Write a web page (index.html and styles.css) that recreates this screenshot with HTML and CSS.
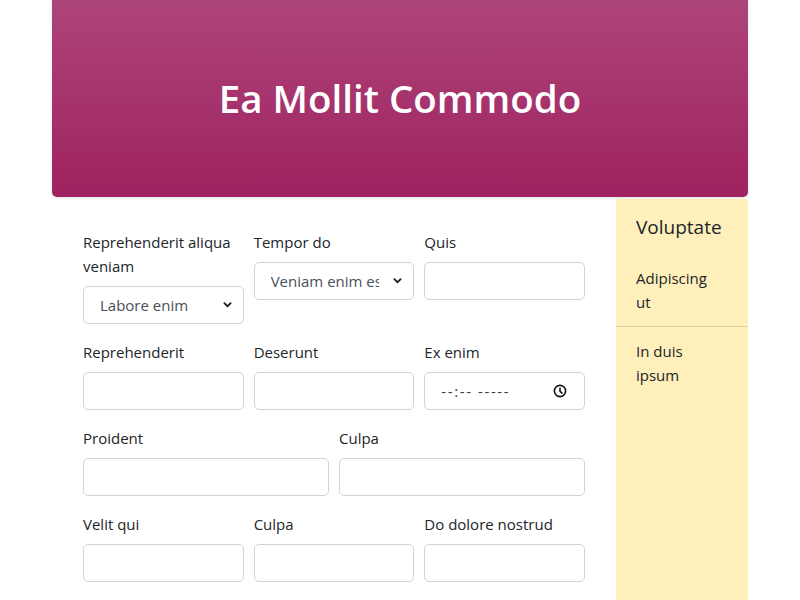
FILE: index.html
```html
<!DOCTYPE html>
<html lang="en">
<head>
<meta charset="utf-8">
<title>Ea Mollit Commodo</title>
<link rel="stylesheet" href="styles.css">
</head>
<body>
<div class="container">
  <header class="hero">
    <h1 class="hero-title">Ea Mollit Commodo</h1>
  </header>
  <div class="layout">
    <main class="main">
      <form class="form">
        <div class="row row-3">
          <div class="field">
            <label class="label" for="f1">Reprehenderit aliqua veniam</label>
            <select id="f1" class="control select"><option>Labore enim</option></select>
          </div>
          <div class="field">
            <label class="label" for="f2">Tempor do</label>
            <select id="f2" class="control select"><option>Veniam enim est</option></select>
          </div>
          <div class="field">
            <label class="label" for="f3">Quis</label>
            <input id="f3" class="control" type="text">
          </div>
        </div>
        <div class="row row-3">
          <div class="field">
            <label class="label" for="f4">Reprehenderit</label>
            <input id="f4" class="control" type="text">
          </div>
          <div class="field">
            <label class="label" for="f5">Deserunt</label>
            <input id="f5" class="control" type="text">
          </div>
          <div class="field">
            <label class="label" for="f6">Ex enim</label>
            <div class="time-wrap">
              <input id="f6" class="control time" type="text" placeholder="--:-- -----">
              <svg class="clock" width="14" height="14" viewBox="0 0 14 14" aria-hidden="true">
                <circle cx="7" cy="7" r="5.6" fill="none" stroke="#111" stroke-width="1.6"/>
                <path d="M7 4.2V7.3L9 9.2" fill="none" stroke="#111" stroke-width="1.6" stroke-linecap="round" stroke-linejoin="round"/>
              </svg>
            </div>
          </div>
        </div>
        <div class="row row-2">
          <div class="field">
            <label class="label" for="f7">Proident</label>
            <input id="f7" class="control" type="text">
          </div>
          <div class="field">
            <label class="label" for="f8">Culpa</label>
            <input id="f8" class="control" type="text">
          </div>
        </div>
        <div class="row row-3">
          <div class="field">
            <label class="label" for="f9">Velit qui</label>
            <input id="f9" class="control" type="text">
          </div>
          <div class="field">
            <label class="label" for="f10">Culpa</label>
            <input id="f10" class="control" type="text">
          </div>
          <div class="field">
            <label class="label" for="f11">Do dolore nostrud</label>
            <input id="f11" class="control" type="text">
          </div>
        </div>
      </form>
    </main>
    <aside class="sidebar">
      <h5 class="side-title">Voluptate</h5>
      <ul class="side-list">
        <li class="side-item">Adipiscing ut</li>
        <li class="side-item">In duis ipsum</li>
      </ul>
    </aside>
  </div>
</div>
</body>
</html>
```
FILE: styles.css
```css
* { box-sizing: border-box; }
html, body { margin: 0; padding: 0; }
body {
  font-family: "Open Sans", "Noto Sans", sans-serif;
  font-size: 16px;
  line-height: 24px;
  color: #212529;
  background: #fff;
}
.container {
  width: 696px;
  margin: 0 auto;
}
.hero {
  height: 197px;
  display: flex;
  align-items: center;
  justify-content: center;
  background: linear-gradient(180deg, #ad4579 0%, #9f2261 100%);
  border-radius: 0 0 5px 5px;
  box-shadow: 0 1px 3px rgba(0, 0, 0, 0.12);
}
.hero-title {
  margin: 0 0 2px;
  color: #fff;
  font-size: 38.5px;
  line-height: 48px;
  font-weight: 600;
}
.layout {
  display: flex;
  margin-top: 2px;
  min-height: 401px;
}
.main {
  flex: 1;
  padding: 31px 31px 16px;
}
.form {
  display: flex;
  flex-direction: column;
  gap: 16px;
}
.row {
  display: grid;
  column-gap: 10px;
  align-items: start;
}
.row-3 { grid-template-columns: 1fr 1fr 1fr; }
.row-2 { grid-template-columns: 1fr 1fr; }
.field {
  display: flex;
  flex-direction: column;
}
.label {
  display: block;
  margin-bottom: 8px;
  font-size: 15px;
  line-height: 24px;
}
.control {
  display: block;
  width: 100%;
  height: 38px;
  padding: 0 16px;
  border: 1px solid #ced4da;
  border-radius: 5px;
  background-color: #fff;
  font-family: inherit;
  font-size: 15px;
  color: #212529;
  margin: 0;
}
.select {
  appearance: none;
  -webkit-appearance: none;
  color: #495057;
  padding-right: 34px;
  background-image: url("data:image/svg+xml,%3csvg xmlns='http://www.w3.org/2000/svg' viewBox='0 0 16 16'%3e%3cpath fill='none' stroke='%23212529' stroke-linecap='round' stroke-linejoin='round' stroke-width='3' d='m3 5 5 5 5-5'/%3e%3c/svg%3e");
  background-repeat: no-repeat;
  background-position: right 10px center;
  background-size: 11px 10px;
}
.time-wrap {
  position: relative;
}
.time {
  padding-right: 40px;
}
.time::placeholder {
  color: #3a3f44;
  opacity: 1;
  letter-spacing: 1.6px;
}
.clock {
  position: absolute;
  right: 18px;
  top: 12px;
}
.sidebar {
  width: 132px;
  background: #feefbb;
  border-radius: 3px 3px 0 0;
}
.side-title {
  margin: 0;
  padding: 16px 20px 15px;
  font-size: 19px;
  line-height: 24px;
  font-weight: 400;
}
.side-list {
  list-style: none;
  margin: 0;
  padding: 0;
}
.side-item {
  padding: 12px 32px 12px 20px;
  font-size: 15px;
  line-height: 24px;
  border-bottom: 1px solid #dfd3a6;
}
.side-item:last-child { border-bottom: none; }
```
